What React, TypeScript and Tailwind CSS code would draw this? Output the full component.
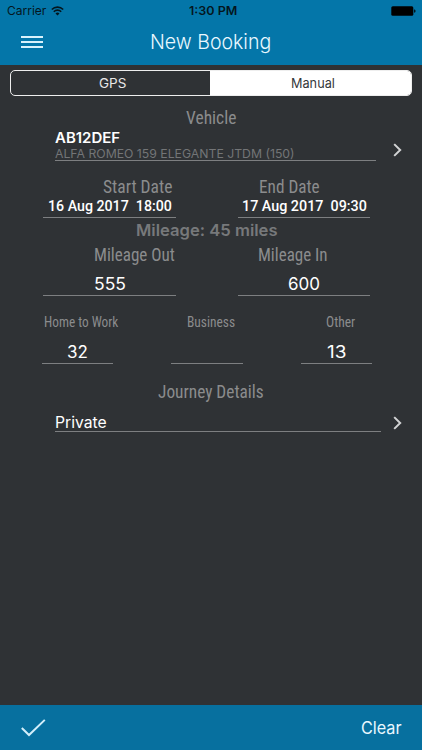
import { useLayoutEffect, useRef, useState } from "react";

/** One line of text, condensed or widened to fill the given width. */
function Fit({ text, width, className = "" }: { text: string; width: number; className?: string }) {
  const ref = useRef<HTMLSpanElement>(null);
  const [scale, setScale] = useState(1);
  useLayoutEffect(() => {
    if (ref.current) setScale(width / ref.current.offsetWidth);
  }, [text, width]);
  return (
    <div className={`shrink-0 whitespace-pre ${className}`} style={{ width }}>
      <span ref={ref} className="inline-block origin-left" style={{ transform: `scaleX(${scale})` }}>
        {text}
      </span>
    </div>
  );
}

const sf = "font-['Inter','Liberation_Sans',sans-serif]";
const roboto = "font-['Roboto_Condensed','Roboto',sans-serif]";
const label = `${roboto} text-[17.5px] leading-[21px] text-[#8b8c8d]`;
const smallLabel = `${roboto} text-[14px] leading-[16px] text-[#8b8c8d]`;
const date = "font-['Roboto',sans-serif] text-[15px] leading-[18px] font-medium text-white";
const value = `${sf} text-[17px] leading-[21px] text-white`;

function Chevron() {
  return (
    <svg className="h-[14px] w-[9px] shrink-0" viewBox="0 0 9 14" fill="none" stroke="#d2d3d4" strokeWidth="2">
      <path d="M1.2 1.1 7.2 7l-6 5.9" />
    </svg>
  );
}

export default function App() {
  return (
    <div className={`flex h-[750px] w-[422px] flex-col overflow-hidden bg-[#2f3235] ${sf}`}>
      <header className="h-[65px] shrink-0 bg-[#0476a9]">
        <div className="flex h-[21px] items-center pl-[7px] text-[12px] leading-[20px] text-[#04161e]">
          <Fit text="Carrier" width={39} />
          <svg className="ml-[5px] h-[10px] w-[13px]" viewBox="0 0 13 10" fill="none" stroke="#04161e" strokeWidth="1.6">
            <path d="M.8 3.5a8.1 8.1 0 0 1 11.4 0M2.8 5.7a5.2 5.2 0 0 1 7.4 0" />
            <path d="M4.5 7.5a2.8 2.8 0 0 1 4 0l-2 2Z" fill="#04161e" stroke="none" />
          </svg>
          <Fit text="1:30 PM" width={48} className="ml-[125px] font-semibold" />
          <svg className="ml-[154px] h-[10px] w-[25px]" viewBox="0 0 25 10" fill="#000">
            <rect x="0.3" y="0.3" width="22" height="9.4" rx="1.5" />
            <path d="M23.2 3.2c1.8.5 1.8 3.1 0 3.6Z" />
          </svg>
        </div>
        <div className="flex h-[42px] items-center pl-[21px]">
          <div className="flex w-[22px] flex-col gap-[3px]">
            <div className="h-[2px] bg-[#d9f2fc]" />
            <div className="h-[2px] bg-[#d9f2fc]" />
            <div className="h-[2px] bg-[#d9f2fc]" />
          </div>
          <Fit text="New Booking" width={121} className="ml-[107px] text-[20.5px] leading-[26px] font-light text-[#e9f8ff]" />
        </div>
      </header>

      <main className="h-[640px] shrink-0 pt-[5px]">
        <div className="ml-[10px] flex h-[26px] w-[402px] overflow-hidden rounded-[5px] border border-[#eeeeee] text-[13px] leading-[24px]">
          <div className="flex w-[199px] justify-center pl-[3px] text-[#e8e8e8]">
            <Fit text="GPS" width={27} />
          </div>
          <div className="flex flex-1 justify-center bg-white pl-[5px] text-[#35383b]">
            <Fit text="Manual" width={44} />
          </div>
        </div>

        <div className="mt-[12px] flex h-[20px] pl-[186px]">
          <Fit text="Vehicle" width={50} className={label} />
        </div>
        <div className="mt-[1px] flex items-center pl-[55px]">
          <div className="h-[32px] w-[321px] border-b border-[#7d7f81]">
            <Fit text="AB12DEF" width={65} className="h-[16px] text-[14.5px] leading-[18px] font-semibold text-white" />
            <Fit text="ALFA ROMEO 159 ELEGANTE JTDM (150)" width={240} className="text-[12.3px] leading-[18px] text-[#737577]" />
          </div>
          <div className="ml-[17px] mt-[9px]">
            <Chevron />
          </div>
        </div>

        <div className="mt-[16px] flex h-[20px]">
          <Fit text="Start Date" width={69} className={`ml-[103px] ${label}`} />
          <Fit text="End Date" width={61} className={`ml-[87px] ${label}`} />
        </div>
        <div className="flex h-[21px] pl-[43px]">
          <div className="w-[133px] border-b border-[#7d7f81] pl-[5px]">
            <Fit text="16 Aug 2017  18:00" width={124} className={date} />
          </div>
          <div className="ml-[62px] w-[132px] border-b border-[#7d7f81] pl-[4px]">
            <Fit text="17 Aug 2017  09:30" width={125} className={date} />
          </div>
        </div>
        <div className="mt-[2px] flex h-[20px] pl-[136px]">
          <Fit text="Mileage: 45 miles" width={142} className="text-[16.5px] leading-[20px] font-semibold text-[#77797b]" />
        </div>
        <div className="mt-[5px] flex h-[20px]">
          <Fit text="Mileage Out" width={81} className={`ml-[94px] ${label}`} />
          <Fit text="Mileage In" width={70} className={`ml-[83px] ${label}`} />
        </div>
        <div className="mt-[9px] flex h-[22px] pl-[43px]">
          <div className="w-[133px] border-b border-[#7d7f81] pl-[51px]">
            <Fit text="555" width={32} className={value} />
          </div>
          <div className="ml-[62px] w-[132px] border-b border-[#7d7f81] pl-[50px]">
            <Fit text="600" width={32} className={value} />
          </div>
        </div>

        <div className="mt-[18px] flex h-[16px]">
          <Fit text="Home to Work" width={74} className={`ml-[44px] ${smallLabel}`} />
          <Fit text="Business" width={48} className={`ml-[69px] ${smallLabel}`} />
          <Fit text="Other" width={29} className={`ml-[91px] ${smallLabel}`} />
        </div>
        <div className="mt-[12px] flex h-[22px] pl-[42px]">
          <div className="w-[71px] border-b border-[#7d7f81] pl-[25px]">
            <Fit text="32" width={21} className={value} />
          </div>
          <div className="ml-[58px] w-[72px] border-b border-[#7d7f81]" />
          <div className="ml-[58px] w-[71px] border-b border-[#7d7f81] pl-[26px]">
            <Fit text="13" width={19} className={value} />
          </div>
        </div>

        <div className="mt-[18px] flex h-[20px] pl-[158px]">
          <Fit text="Journey Details" width={106} className={label} />
        </div>
        <div className="mt-[11px] flex h-[19px] pl-[55px]">
          <div className="w-[326px] border-b border-[#7d7f81]">
            <Fit text="Private" width={52} className="text-[16px] leading-[19px] text-white" />
          </div>
          <div className="ml-[12px] mt-[3px]">
            <Chevron />
          </div>
        </div>
      </main>

      <footer className="flex h-[45px] shrink-0 items-center bg-[#07709f] pl-[21px]">
        <svg className="h-[18px] w-[25px]" viewBox="0 0 25 18" fill="none" stroke="#d3eefa" strokeWidth="2">
          <path d="M.8 9 8 16 23.8.9" />
        </svg>
        <Fit text="Clear" width={41} className="ml-[315px] text-[17px] leading-[22px] text-[#e9f8ff]" />
      </footer>
    </div>
  );
}
